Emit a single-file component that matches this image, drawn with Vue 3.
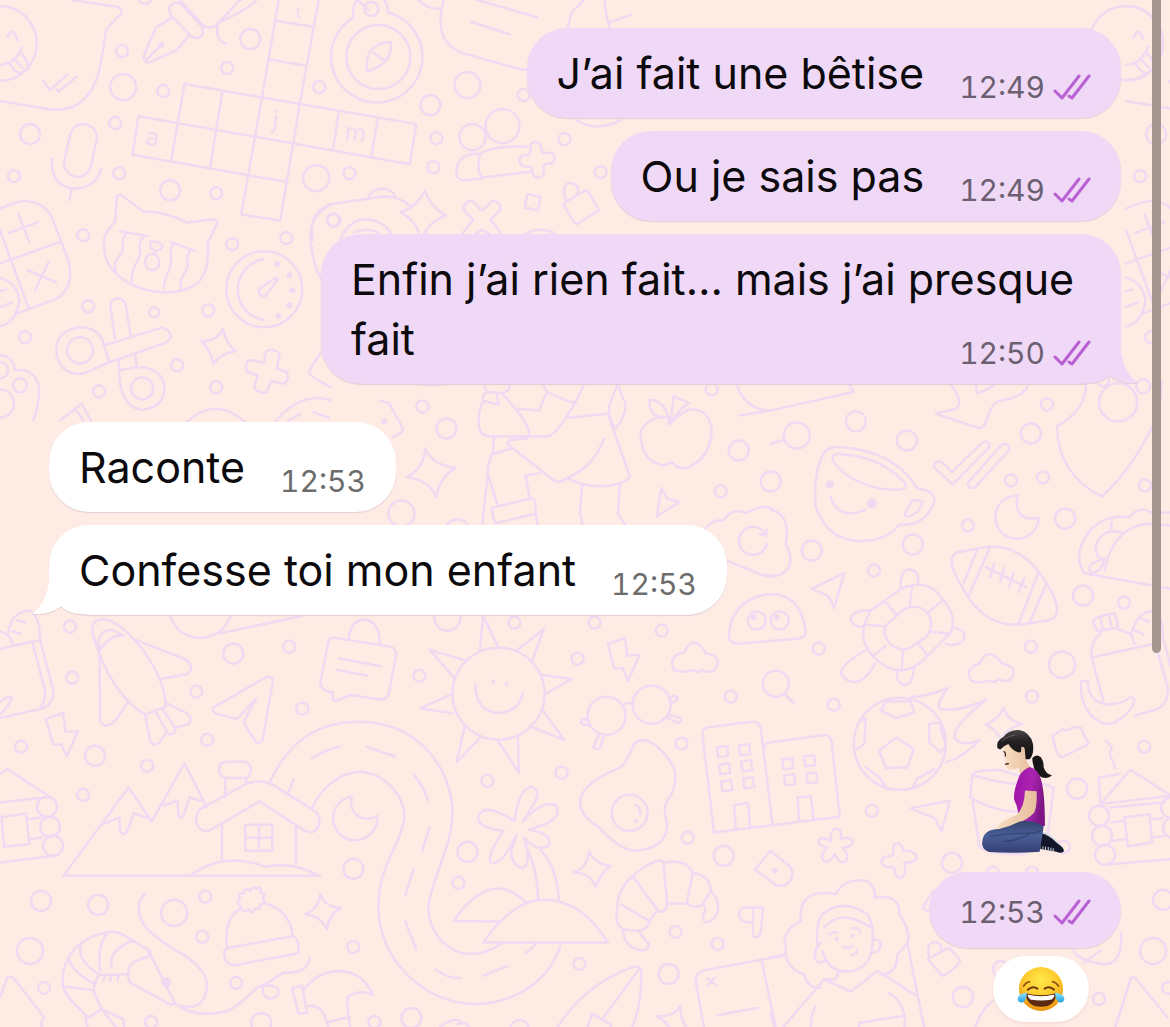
<script setup>
const messages = [
  { id: 1, out: true, text: 'J’ai fait une bêtise', time: '12:49' },
  { id: 2, out: true, text: 'Ou je sais pas', time: '12:49' },
  { id: 3, out: true, text: 'Enfin j’ai rien fait… mais j’ai presque fait', time: '12:50', tail: true, long: true },
  { id: 4, out: false, text: 'Raconte', time: '12:53', first: true },
  { id: 5, out: false, text: 'Confesse toi mon enfant', time: '12:53', tail: true },
]

// Confetti rings of the wallpaper: [x, y, radius]
const rings = [
  [145, -2, 6], [122, 51, 6], [123, 87, 13], [163, 91, 6], [250, 39, 10], [227, 68, 6], [319, 87, 6], [115, 123, 6],
  [30, 134, 10], [14, 176, 6], [119, 173, 6], [170, 190, 10], [216, 193, 6], [316, 178, 13], [467, 85, 13], [430, 105, 10],
  [436, 138, 6], [433, 167, 6], [349, 173, 6], [523, 95, 6], [564, 139, 6], [600, 172, 6], [502, 126, 17], [472, 137, 13],
  [378, 57, 32], [371, 9, 7], [83, 235, 6], [232, 244, 6], [286, 238, 6], [88, 306, 6], [154, 312, 5], [208, 310, 6],
  [25, 337, 6], [177, 365, 6], [216, 387, 6], [99, 391, 6], [80, 350, 13], [142, 388, 11], [20, 385, 7], [0, 403, 14],
  [0, 370, 8], [264, 289, 38], [422, 406, 6], [446, 428, 10], [401, 513, 13], [711, 389, 6], [738, 450, 10], [770, 481, 10],
  [720, 491, 6], [514, 622, 6], [594, 622, 6], [661, 630, 6], [457, 532, 13], [447, 617, 13], [796, 435, 13], [855, 421, 10],
  [906, 440, 10], [1046, 404, 6], [1030, 433, 10], [1010, 480, 6], [1042, 477, 6], [967, 525, 6], [912, 544, 10], [811, 550, 10],
  [873, 570, 6], [1064, 518, 10], [1144, 485, 6], [1082, 595, 10], [1123, 602, 6], [1061, 664, 13], [1030, 646, 6], [1031, 696, 6],
  [818, 648, 6], [833, 704, 6], [1117, 402, 19], [1102, 380, 6], [1142, 386, 7], [775, 683, 13], [70, 626, 6], [72, 677, 6],
  [21, 746, 6], [95, 755, 10], [196, 691, 6], [233, 653, 10], [289, 646, 6], [302, 708, 6], [207, 739, 6], [147, 765, 6],
  [83, 794, 6], [353, 868, 10], [47, 806, 10], [50, 826, 10], [53, 845, 10], [577, 658, 6], [419, 675, 6], [730, 696, 6],
  [681, 743, 6], [561, 772, 6], [487, 780, 6], [467, 851, 10], [687, 837, 6], [723, 855, 10], [458, 882, 6], [498, 693, 46],
  [871, 810, 6], [1143, 746, 6], [1076, 788, 10], [951, 862, 10], [992, 872, 6], [1031, 872, 6], [1162, 899, 10], [1152, 950, 13],
  [962, 996, 10], [1098, 998, 6], [1167, 987, 6], [1000, 968, 8], [1063, 846, 6], [1098, 815, 10], [1101, 835, 10], [1104, 854, 10],
  [1170, 807, 10], [1172, 827, 10], [41, 900, 10], [98, 904, 10], [174, 912, 13], [205, 896, 6], [202, 936, 6], [30, 950, 13],
  [44, 987, 6], [236, 982, 6], [151, 1021, 6], [261, 1022, 10], [353, 946, 6], [374, 1021, 6], [675, 931, 6], [717, 943, 6],
  [668, 973, 10], [579, 963, 6], [411, 1017, 10], [519, 1028, 9], [606, 715, 19], [651, 704, 19], [629, 812, 18], [899, 743, 46],
  [756, 620, 9], [779, 620, 9], [333, 220, 6], [1125, 43, 37], [1155, 134, 10], [1139, 176, 6], [1150, 337, 6],
]
const dots = [
  [161, 45, 3], [277, 264, 3], [289, 275, 3], [292, 290, 3], [289, 305, 3], [278, 316, 3], [384, 421, 3], [829, 484, 4],
  [871, 503, 5], [753, 617, 3], [776, 617, 3], [493, 681, 2], [506, 683, 2], [635, 820, 2], [774, 870, 3], [836, 938, 2],
  [852, 935, 2], [166, 981, 5],
]
const windows = [
  [722, 751], [744, 749], [724, 768], [746, 765], [726, 785], [748, 782], [787, 763], [809, 760], [789, 779], [811, 777],
]

const speech = [
  'M0 18A110 112 0 0 1 0 242M22 112Q38 76 52 120M0 195Q50 190 66 140M28 190Q50 225 66 218Q95 205 82 190Q75 170 60 158M45 178L68 203',
  'M215 0L350 20Q370 25 362 42L318 88Q305 180 295 220Q260 340 150 328L0 303M130 243L150 270L203 222M170 268L175 274L231 229',
]
const calculator = 'M0 55Q60 30 78 33Q130 35 155 80L205 210Q225 290 170 325L50 370M0 220L180 155M0 120L85 352M55 72L88 155M28 128L115 95M146 215L105 300M83 240L168 276M0 262Q50 275 58 330Q50 395 0 408M0 303L18 298M0 350L35 337'

// Line drawings, grouped by the area of the wallpaper they fill (units are a third of a pixel)
const sketches = [
  { x: 1125, y: 0, d: speech },
  { x: 1125, y: 190, d: [calculator] },
  { x: 0, y: 0, d: [
    ...speech,
    'M512 55L468 82Q440 140 430 172Q432 190 450 186L530 150L565 108M512 45Q500 20 520 10Q535 5 545 15L605 80Q615 105 595 114Q580 115 570 105ZM538 0L612 78Q640 90 655 68L720 0M655 68Q750 25 768 0M655 68Q640 120 678 131M440 178L484 134',
    'M835 0L785 293L723 643L840 661L898 313L955 0M827 62L940 80M805 178L918 197M553 252L1248 372L1228 492L415 348L397 464L858 545M553 252L513 482M667 272L630 500M1015 338L998 450M1133 355L1113 467',
    'M210 405Q220 370 252 372Q292 380 290 415L272 500Q260 532 230 530Q190 520 192 485ZM156 476Q150 560 225 566Q290 560 304 505M215 568L208 600',
  ] },
  { x: 300, y: 0, d: [
    'M160 52A137 137 0 1 0 265 38M160 52Q155 20 170 0M265 38Q262 15 252 0M200 214Q190 130 272 126Q275 195 200 214M218 158L250 180M172 0L205 30',
    'M355 0Q375 25 420 28M430 0Q395 130 490 160L660 208L690 209M530 0L710 52M512 65L628 103M850 0L812 38L802 82M912 0Q915 50 928 82M925 68L990 45',
    'M540 460Q465 460 468 520Q470 540 490 540L545 535M540 460Q525 510 545 532L690 515M540 460Q580 435 680 440',
    'M690 440Q690 425 705 425Q722 428 722 445Q722 460 735 458Q762 455 763 473Q762 492 742 490Q726 490 730 505Q735 530 712 532Q695 530 695 510Q694 498 680 500Q655 498 657 478Q660 462 678 465Q692 465 690 440Z',
    'M825 358Q885 400 965 358M788 610L855 570Q865 572 895 630L828 672Q820 670 788 610ZM796 600Q780 550 812 548Q840 555 830 580M680 582L720 590L712 630L673 622Z',
    'M373 572Q390 620 436 645Q395 660 373 697M373 572Q350 620 300 635Q345 660 355 697M488 697L518 660L490 630Q490 603 515 602L545 632L575 602Q600 603 600 628L570 658L600 697M525 700L545 688L565 700',
    'M38 720Q20 640 90 612L250 588Q300 590 325 615M205 590Q215 565 250 566Q275 568 285 588M120 715Q150 655 200 657Q250 662 270 697M160 697Q200 680 235 697M80 660A20 20 0 1 1 120 660A20 20 0 1 1 80 660M680 697Q720 680 760 697',
  ] },
  { x: 0, y: 190, d: [
    calculator,
    'M345 95L350 20Q358 8 370 20L430 64Q490 62 560 97L640 87Q655 90 648 105L622 160Q630 230 600 270Q560 310 480 305Q400 300 345 248Q300 200 315 135Q325 115 345 95ZM360 123L442 137M510 155L585 182M378 130q-15 20-10 35t-12 35t-10 45M428 140q-12 20-8 35t-12 45t-14 55M520 160q-12 20-8 40t-6 40t-16 55M570 180q-12 20-8 35t-10 35t-10 50',
    'M450 155Q475 150 488 168Q475 185 460 180Q448 172 450 155ZM468 180L462 192M435 216A21 25 0 1 1 477 216A21 25 0 1 1 435 216',
    'M791 207A92 92 0 0 0 791 389M822 265L778 295Q772 318 795 318L832 268Q832 260 822 265Z',
    'M345 445L330 345Q335 322 358 324Q375 328 378 350L392 437M312 465L485 412Q512 418 512 440Q505 455 490 460L330 515L250 550Q175 555 168 480Q170 420 240 411Q300 412 312 465L328 515M355 510L357 540Q358 650 425 659Q495 650 493 590Q485 530 410 530L357 540M405 493L410 530',
    'M668 415Q680 465 706 482Q660 490 640 520Q630 475 603 452Q650 455 668 415ZM797 484Q815 470 838 490L830 535L860 545Q868 570 850 580L812 572L800 605Q775 612 762 592L772 555L740 545Q732 515 750 508L790 518Z',
    'M0 495Q40 498 45 540Q110 530 118 600Q115 650 100 690M180 690L245 640L272 690M225 655L250 690M555 700Q645 610 740 700M820 700Q900 600 990 630M865 690L900 670M940 665L985 682M962 485L925 545Q925 555 990 590M990 45Q920 80 932 160Q940 230 965 270',
  ] },
  { x: 380, y: 370, d: [
    'M110 40Q155 50 200 40M0 92L25 97L68 175Q68 190 35 200M135 233Q155 285 226 292Q180 315 167 380Q150 330 78 320Q130 295 135 233Z',
    'M312 45L318 65L360 68Q390 65 388 40M318 65Q305 75 308 92L355 103L350 75M308 92Q290 130 296 170Q300 200 340 198L500 198Q540 190 612 40M365 70Q450 160 445 190L440 205L390 208L380 220L520 330Q540 340 560 322Q640 290 670 205M410 115L475 120L498 70M490 45Q485 70 585 98M565 142L680 130M712 40Q695 80 685 110Q685 150 705 175Q735 140 735 100Q720 70 712 40M685 140L748 318Q740 335 690 345Q620 355 560 322',
    'M340 198L338 245Q320 280 322 310L305 465M338 250L390 235M322 310L350 400M478 308L435 315L448 385M335 412L455 383Q468 385 465 430L345 458Q335 440 335 412ZM465 430L472 465M605 345L598 425L607 465M718 338L712 430L735 465',
    'M868 140Q800 135 780 185Q780 275 850 285L875 275Q890 300 925 290Q990 260 993 180Q985 110 925 118Q895 130 866 162Q860 90 806 88Q805 140 850 140M872 150L878 78L926 98Q900 110 880 145M842 352L828 438L897 394L860 385Z',
    'M975 475Q995 445 1030 450Q1050 410 1095 428Q1150 400 1175 415M1032 568L1150 615L1170 618M1158 520A42 42 0 1 1 1150 485M1158 478L1155 495L1138 490M1068 42Q1090 115 1170 122M1170 220L1208 208',
    'M1044 801Q1050 690 1155 672Q1260 660 1275 786Q1272 801 1254 804L1071 819Q1050 819 1044 801Z',
  ] },
  { x: 770, y: 380, d: [
    'M-95 105L0 90L248 35L235 12M540 12Q580 70 555 85L495 100L625 143Q640 145 650 110Q665 65 690 60Q760 50 772 12M615 12L617 38Q640 35 668 15M945 12Q945 90 858 138Q860 280 992 348Q1080 270 1148 130Q1175 60 1170 0',
    'M160 215Q175 200 205 200Q370 210 440 325Q495 330 490 365Q460 440 385 432Q350 480 270 482Q170 480 135 380Q125 280 160 215ZM185 235Q185 215 220 222Q330 230 400 305Q415 325 385 328Q300 330 230 285Q190 255 185 235ZM180 350Q200 420 283 388M425 358L455 362Q450 395 415 407L400 405Z',
    'M543 275L510 243Q495 240 487 258L545 312L655 200Q655 178 635 185ZM695 190Q720 190 714 210L610 322Q590 325 590 308ZM740 345A65 65 0 1 0 803 412Q725 425 740 345Z',
    'M560 515L655 498Q740 495 800 570Q860 650 858 690Q855 715 835 718L760 730Q660 745 595 655Q540 570 542 540Q545 520 560 515ZM620 505L577 610M657 500L592 650M803 575L742 730M826 610L775 728M645 560L765 620M670 548L658 590M700 562L688 604M728 577L714 620M760 592L742 635',
    'M300 690L390 625Q470 590 515 655Q560 710 540 755L450 845Q380 900 310 830Q250 770 300 690ZM345 735L400 685Q450 665 475 705Q490 740 465 770L420 800Q380 820 350 780Q335 755 345 735ZM425 615L415 680M515 660L475 692M475 752L535 760M440 785L470 825M397 808L392 870M345 795L305 828M340 737L280 732M345 665L375 700M390 625Q385 565 420 567Q448 575 440 610M300 690Q240 685 240 720Q250 740 275 738M548 742Q585 745 580 775Q565 800 525 790M430 860Q425 915 400 913Q375 905 378 872M285 808Q205 855 212 880Q230 910 265 902Q295 885 312 850',
    'M122 625L220 578L190 683Q178 650 165 642ZM0 388Q60 400 45 490Q75 550 40 575Q20 592 -20 584M600 900Q580 860 625 850Q650 790 695 850Q735 855 727 885Q710 912 685 895Q670 910 650 900Q620 910 600 900ZM42 942L70 968',
    'M940 578Q900 520 960 445Q1010 400 1075 410Q1110 370 1145 400L1200 395M940 578L1200 625M960 575Q940 550 1000 535Q990 580 960 575M1000 570Q1030 430 1140 430L1200 435M1050 455Q990 440 973 500Q978 540 1000 535M1022 420L1020 445',
    'M968 720Q965 710 1030 698Q1040 720 1040 740L980 752Q968 740 968 720ZM988 708L995 750M1014 702L1022 745M988 758Q955 790 962 830L998 965M965 830L1170 785M1030 742L1080 760L1090 790M1082 755Q1100 690 1150 692Q1175 700 1175 770L1200 860M1160 815L1190 920Q1195 965 1160 985L1090 1005M1110 715L1135 722M1092 750L1118 762M930 900L950 902Q950 960 1000 970Q1050 975 1080 948Q1095 955 1085 975Q1050 1030 1000 1030Q925 1000 930 900Z',
  ] },
  { x: 0, y: 590, d: [
    'M25 125Q35 65 85 60Q120 70 120 148L160 300Q160 350 110 357L0 382M0 175L118 148M97 155L135 300Q135 340 115 357M0 122Q30 130 38 160M50 88L75 95M38 122L62 130M0 372Q30 345 35 320Q20 315 0 335',
    'M137 385L190 367L195 422L233 422L200 498L185 462L160 460ZM278 130Q270 85 310 86Q360 90 430 180Q500 280 495 350L470 358L435 372Q330 310 278 130ZM298 190L300 390Q315 420 345 390L383 335M400 145L560 208Q585 235 560 250L480 265M298 180Q330 130 370 135Q310 95 295 150ZM435 372L450 450Q460 470 478 455L495 430M495 335L560 368Q580 385 565 400L525 412M465 362L505 430Q525 435 525 412L485 352',
    'M640 350L800 258Q818 258 818 270L788 445Q780 460 768 455L730 395L768 323L710 385L645 368Q635 360 640 350ZM508 70Q530 140 600 142Q670 140 693 70M660 128L905 76',
    'M985 150Q990 140 1005 142L1170 168Q1190 175 1187 195L1165 310Q1160 325 1145 327L1050 313L1005 332Q995 330 997 305Q960 300 960 275ZM1045 148Q1050 85 1095 87Q1140 95 1138 162M1015 203L1142 227M1008 237L1102 255',
    'M0 550L22 535L150 618L0 635M0 680L78 668L88 760L12 768L5 680M82 685L120 680M90 745L125 740M0 815L165 795',
    'M190 855L385 590L455 692L553 517L620 650M190 855H960M303 702L358 680L360 720Q370 745 385 712L402 667L440 682M490 645L532 630L535 675Q545 690 555 660L568 620L610 632',
    'M600 655L740 578Q780 565 815 580L945 662Q970 690 945 720Q930 730 910 718L778 632L630 718Q600 730 587 690Q588 665 600 655ZM665 700V805M887 705V820M735 702H816V780H735ZM776 702V780M735 741H816M570 855Q670 780 795 828Q880 810 955 855M675 620V565M738 578V565M680 562Q657 560 657 538Q657 513 680 513H730Q752 515 752 538Q750 562 730 562Z',
    'M808 576C870 435 975 390 1080 393C1260 396 1359 540 1356 675C1350 780 1296 855 1284 945C1284 1035 1350 1089 1410 1089Q1460 1089 1500 1059M933 654C975 570 1035 543 1086 543C1170 555 1212 630 1212 675C1206 760 1134 820 1134 945C1134 1110 1275 1239 1422 1239C1545 1239 1644 1170 1680 1065',
    'M935 503Q980 475 1018 468M1100 468L1183 498M880 565L862 612M1055 617A66 66 0 1 0 1130 675C1085 700 1040 665 1055 617Z',
  ] },
  { x: 390, y: 600, d: [
    'M268 148L278 45L322 138M380 148L460 85L425 180M455 222L543 235L465 280M458 330L520 417L420 378M382 408L385 516L322 420M268 412L198 485L222 380M185 338L90 323L185 280M190 230L117 147L225 180M255 250Q255 330 320 337Q385 335 397 278',
    'M652 130L703 112L710 165L747 162L712 242L697 203L672 205ZM850 208Q830 165 880 155Q910 95 945 158Q990 165 980 195Q965 225 935 208Q920 218 905 208Q880 218 850 208ZM1183 280L1210 308',
    'M697 315Q705 305 730 308M838 290Q860 280 860 297Q850 308 838 303M835 342L870 352Q878 362 862 367L828 350M592 355Q570 355 570 366Q580 376 594 372M625 402L608 440Q618 450 630 440L640 402',
    'M755 418Q800 420 850 500Q865 550 830 600Q815 620 830 670Q830 740 735 750Q690 750 620 675Q560 640 570 590Q590 540 690 500Q705 490 725 440Q735 418 755 418ZM735 612Q750 620 748 640',
    'M970 695L935 400Q935 385 950 380L1085 363Q1105 362 1110 380L1145 670M970 695L1347 648L1322 420Q1318 405 1305 403L1135 425Q1120 428 1120 445M1035 685L1030 613L1072 607L1078 680M1225 658L1220 590L1260 586L1268 652',
    'M372 660Q385 560 425 558Q450 570 435 600L398 662Q450 600 495 612Q520 650 450 675L415 687Q490 700 473 735Q440 755 400 710Q425 790 395 802Q360 790 362 750L378 703Q330 800 300 785Q290 760 340 690Q260 680 263 650Q275 600 372 660ZM405 735Q440 800 443 895M450 748Q500 800 505 898',
    'M595 752Q620 795 660 795Q630 815 615 860Q600 815 550 815Q590 800 595 752ZM70 520Q100 560 112 598M118 678L95 750M70 805L45 882M0 460L10 468',
  ] },
  { x: 390, y: 850, d: [
    'M190 210L325 212M190 210Q300 50 405 153M278 275Q370 145 460 147Q570 145 652 275ZM45 212L78 297M135 355Q170 382 210 382M278 375L352 345M405 308L435 280',
    'M725 75Q780 30 812 28L820 35Q890 25 905 65Q960 75 960 120Q990 150 980 185Q965 215 945 215Q930 205 943 180Q945 165 935 162Q910 175 888 158L830 158Q825 190 800 180Q780 200 775 215Q770 235 745 240Q755 260 775 280Q775 300 750 298Q700 290 697 235Q670 220 680 170Q680 120 725 75ZM725 75L803 180M818 32L830 158M907 65L888 158M960 120L935 162M690 160L775 210M697 235L745 240',
    'M1085 215Q1045 215 1045 190Q1045 170 1070 170H1117L1110 245Q1105 262 1090 258Q1083 255 1088 175M500 531Q580 400 730 347Q755 345 752 365Q755 450 725 531M745 355L638 500M590 531L605 488L660 520V531',
    'M795 495Q850 500 868 465Q870 510 890 531M795 495Q825 510 838 531M940 531L915 390Q915 365 940 358L1175 315M1113 330L1155 531M980 493L1103 470M950 382L975 402M972 380L952 404M145 531Q190 495 212 512M200 520L225 515L240 531',
  ] },
  { x: 770, y: 680, d: [
    'M376 170L428 205L410 260L345 262L325 210ZM330 90L378 112L430 95L420 62L345 62ZM475 130L505 125L525 195L510 215L475 185ZM275 118L285 115L280 190L258 205M285 260L325 290L350 325M490 265L438 295L425 322M420 50Q480 45 530 22Q490 80 510 85Q560 95 645 58Q550 130 550 170Q570 200 625 178Q580 230 525 245',
    'M697 80Q710 120 752 130Q700 145 690 180Q680 150 645 132Q690 110 697 80M845 165L875 145L880 150L915 138L930 142L952 190L872 230Q855 225 845 165ZM1005 180L1022 200Q1010 225 1025 240L1032 262',
    'M983 290L1045 280M983 290L988 370L1078 267L1200 345L988 370M1015 380L1180 365M1060 410L1135 400L1143 485L1070 497ZM1020 425L1060 420M1140 415L1175 412M1025 480L1065 475M1145 470L1180 465M1000 552L1200 535',
    'M605 280Q620 265 690 268L848 320L825 500M605 280L597 350Q690 405 780 390M605 360L625 495Q640 520 760 520M610 285Q700 310 750 310M420 382L537 360L512 452L492 412Q455 400 420 382Z',
    'M180 480Q178 445 195 443Q215 445 210 475Q245 465 245 485Q240 500 215 500Q240 530 222 543Q205 550 192 520Q175 550 158 540Q145 525 170 500Q140 495 143 478Q155 465 180 480ZM370 490Q390 480 398 510Q435 510 437 530Q430 548 400 545Q410 590 385 592Q370 585 370 560Q330 560 332 540Q335 525 365 525ZM0 512L50 550Q75 575 58 600Q40 622 15 612L-47 567L-2 510Z',
    'M150 920Q110 925 100 880Q40 860 45 800Q30 750 90 720Q80 620 195 640Q220 590 290 600Q320 630 310 650Q390 640 385 700Q420 750 410 785Q400 800 380 820Q380 880 330 880M140 800Q135 720 155 700Q215 650 290 700Q310 730 305 790Q300 870 225 872Q170 870 155 810M160 740Q210 680 300 740M152 785Q130 800 132 835Q145 850 160 840M305 775Q335 775 328 800Q320 820 305 812M175 765Q180 750 200 755M245 742Q265 738 268 755M215 798Q235 805 245 795M240 822Q262 820 258 805',
    'M205 870L195 895L160 895L35 1041M160 895L240 932L320 870L438 945M120 1041Q120 1000 135 975M355 937Q410 970 400 1041M265 1041V1025L395 1005M410 790L460 1041M0 828L40 822M0 1000L12 1041',
    'M470 835L535 800L568 838Q550 870 515 885ZM475 830Q465 785 490 783Q515 785 510 810M488 628L455 680Q460 690 485 692M908 808Q920 840 1000 850Q1055 850 1050 755M940 845L990 808M612 1041Q640 960 690 950M1032 1041L1080 890Q1090 885 1100 900L1190 1010',
  ] },
  { x: 0, y: 850, d: [
    'M385 380Q375 330 445 318L450 300L395 268Q350 235 320 245Q240 260 205 320Q165 400 215 450L265 500L305 475L280 420Q285 380 300 372L380 370M445 300L525 458Q515 465 500 455L390 395L385 380M400 268Q320 300 335 350M320 248Q290 290 300 360M242 282Q230 330 300 372M205 320Q220 370 288 400M197 408L283 418M255 495L262 531M305 475L370 505L372 531M305 475L350 531M315 375L310 390M335 370L330 390M355 370L352 390',
    'M435 128Q400 160 430 220Q450 250 530 300Q620 350 620 405Q615 470 565 467Q530 465 525 458Q590 505 680 480Q710 470 770 410Q810 395 850 365Q920 370 928 322M790 405Q780 440 815 443Q845 430 830 410Q810 400 790 405',
    'M680 292Q670 200 720 175M790 155Q870 180 878 255M680 292L880 255Q900 270 893 308L700 343Q670 340 672 300ZM720 165Q705 150 720 145Q710 125 730 128Q735 105 750 120Q760 100 768 115Q785 100 780 125Q800 130 788 142Q800 158 780 160Q785 180 765 172Q755 195 748 175Q725 190 720 165Z',
    'M960 130Q975 170 1022 170Q985 190 980 235Q960 195 915 190Q955 175 960 130ZM875 412L905 404L920 485L895 488ZM910 418Q950 360 1020 360Q1090 365 1118 432Q1080 415 1045 435Q1035 450 1050 531M925 465Q965 460 980 515L985 531M985 512L1048 498M0 440L22 380Q30 375 40 380L133 500L120 520L130 531',
  ] },
]
</script>

<template>
  <main class="chat">
    <svg class="wallpaper" viewBox="0 0 1170 1027" preserveAspectRatio="xMinYMin slice" aria-hidden="true">
      <g class="lines">
        <circle v-for="([x, y, r], i) in rings" :key="i" :cx="x" :cy="y" :r="r" />
        <rect
          v-for="([x, y], i) in windows"
          :key="i"
          :x="x - 5"
          :y="y - 5"
          width="10"
          height="10"
          :transform="`rotate(-7 ${x} ${y})`"
        />
      </g>
      <g class="dots">
        <circle v-for="([x, y, r], i) in dots" :key="i" :cx="x" :cy="y" :r="r" />
        <text x="152" y="145" transform="rotate(8 152 138)">a</text>
        <text x="275" y="128" transform="rotate(8 275 122)">j</text>
        <text x="355" y="141" transform="rotate(8 355 134)">m</text>
        <text class="minor" x="298" y="18">t</text>
      </g>
      <g
        v-for="(sketch, i) in sketches"
        :key="i"
        class="sketch"
        :transform="`translate(${sketch.x} ${sketch.y}) scale(0.33333)`"
      >
        <path v-for="(d, j) in sketch.d" :key="j" :d="d" />
      </g>
    </svg>

    <div class="scrollbar"></div>

    <section class="thread">
      <article
        v-for="m in messages"
        :key="m.id"
        class="bubble"
        :class="{ out: m.out, in: !m.out, long: m.long, first: m.first }"
      >
        <svg v-if="m.tail" class="tail" viewBox="0 0 56 44" aria-hidden="true">
          <path d="M18 0C17 20 12 33 0 42C10 44 20 41 29 35C35 41 44 43 56 43V0Z" />
          <path class="edge" d="M0 42C10 44 20 41 29 35C35 41 44 43 56 43" />
        </svg>
        <span class="text">{{ m.text }}</span>
        <span class="meta">
          <time>{{ m.time }}</time>
          <svg v-if="m.out" class="ticks" viewBox="0 0 38 28" aria-label="Lu">
            <path d="M2 18L9 25L26 3M16 23L19 25L36 3" />
          </svg>
        </span>
      </article>

      <article class="sticker">
        <svg class="woman" viewBox="34 36 258 382" role="img" aria-label="Femme à genoux">
          <defs>
            <linearGradient id="jeans" x1="0" y1="0" x2="0" y2="1">
              <stop offset="0" stop-color="#35446f" />
              <stop offset="0.45" stop-color="#4a5f96" />
              <stop offset="1" stop-color="#343f74" />
            </linearGradient>
            <linearGradient id="shirt" x1="0" y1="0" x2="1" y2="0.3">
              <stop offset="0" stop-color="#a012a8" />
              <stop offset="0.6" stop-color="#ab23b0" />
              <stop offset="1" stop-color="#7d1684" />
            </linearGradient>
            <linearGradient id="skin" x1="0" y1="0" x2="1" y2="0">
              <stop offset="0" stop-color="#f9dfc4" />
              <stop offset="1" stop-color="#e6bd9c" />
            </linearGradient>
            <linearGradient id="hair" x1="0" y1="0" x2="0" y2="1">
              <stop offset="0" stop-color="#4a4547" />
              <stop offset="0.4" stop-color="#242022" />
              <stop offset="1" stop-color="#151214" />
            </linearGradient>
          </defs>
          <path fill="#191617" d="M188 126Q200 112 214 124Q223 138 222 154Q228 174 247 178Q236 191 216 184Q192 174 188 130Z" />
          <path fill="#d8dbe2" d="M212 344Q245 352 282 396L274 400L214 362Z" />
          <path fill="#12172c" d="M212 352Q240 358 262 382Q288 400 282 408Q274 414 260 408L212 400Z" />
          <path stroke="#d8dbe2" stroke-width="3" d="M220 392V402M228 393V403M236 394V405M244 396V407M251 398V409" />
          <path fill="url(#skin)" d="M104 84Q98 102 105 116Q102 126 107 134Q105 140 110 145Q108 158 120 161Q136 162 147 155L152 176L184 158L170 134L172 100Q150 70 112 80Z" />
          <path fill="url(#hair)" d="M84 98Q76 76 102 62Q118 40 148 42Q182 48 190 84Q194 114 180 130L168 130L165 98Q160 88 154 96Q157 108 150 110Q128 106 116 84Q104 88 92 101Z" />
          <path fill="none" stroke="#77706f" stroke-width="3" opacity="0.7" d="M96 78Q108 60 136 58" />
          <path fill="none" stroke="#3b2723" stroke-width="4" stroke-linecap="round" d="M103 107Q108 109 107 120M108 145L116 143" />
          <path fill="url(#shirt)" d="M151 176Q160 162 180 153Q205 158 214 190Q226 230 226 330Q200 338 145 322Q150 285 133 250Q131 222 151 176Z" />
          <path fill="url(#skin)" d="M166 224L201 226Q203 270 194 290Q172 314 130 328L96 342Q82 344 79 337Q94 316 110 311L140 298Q165 275 166 224Z" />
          <path fill="url(#jeans)" d="M37 386Q36 340 88 340Q118 334 148 318Q190 310 222 332Q217 370 210 408Q130 414 58 409Q40 404 37 386Z" />
          <path fill="none" stroke="#2d3b66" stroke-width="4" opacity="0.7" d="M60 362Q130 352 184 352Q150 374 100 378M186 354Q206 350 216 342" />
        </svg>
        <div class="bubble out small">
          <span class="meta">
            <time>12:53</time>
            <svg class="ticks" viewBox="0 0 38 28" aria-label="Lu">
              <path d="M2 18L9 25L26 3M16 23L19 25L36 3" />
            </svg>
          </span>
        </div>
        <button class="reaction" type="button" aria-label="Réaction : pleurer de rire">
          <svg viewBox="0 0 146 138" aria-hidden="true">
            <defs>
              <radialGradient id="face" cx="0.5" cy="0.3" r="0.75">
                <stop offset="0" stop-color="#ffea4a" />
                <stop offset="0.55" stop-color="#fdc62a" />
                <stop offset="1" stop-color="#e8890c" />
              </radialGradient>
              <linearGradient id="tear" x1="0" y1="0" x2="0" y2="1">
                <stop offset="0" stop-color="#8fe0fb" />
                <stop offset="1" stop-color="#23a3e6" />
              </linearGradient>
            </defs>
            <circle cx="73" cy="69" r="67" fill="url(#face)" />
            <path fill="#5a2a13" d="M27 82Q73 94 119 82Q118 123 73 123Q28 123 27 82Z" />
            <path fill="#fff" d="M32 86Q73 96 114 86Q114 96 106 101Q73 107 40 101Q33 96 32 86Z" />
            <path fill="none" stroke="#6b3510" stroke-width="6" stroke-linecap="round" d="M33 71Q48 58 62 68M84 68Q98 58 113 71" />
            <path fill="none" stroke="#8b4d10" stroke-width="5" stroke-linecap="round" d="M20 60Q26 49 38 47M108 47Q120 49 126 60" />
            <path fill="url(#tear)" d="M30 80Q0 84 2 102Q6 113 18 109Q30 103 30 80ZM116 80Q146 84 144 102Q140 113 128 109Q116 103 116 80Z" />
          </svg>
        </button>
      </article>
    </section>
  </main>
</template>

<style>
body {
  margin: 0;
  background: #feebe4;
}
</style>

<style scoped>
.chat {
  position: relative;
  min-height: 100vh;
  overflow: hidden;
  box-sizing: border-box;
  background: #feebe4;
  color: #0c0a0d;
  font-family: Inter, "Liberation Sans", sans-serif;
}

.wallpaper {
  position: absolute;
  inset: 0;
  width: 100%;
  height: 100%;
}

.lines,
.sketch {
  fill: none;
  stroke: #f0daf2;
  stroke-width: 2.5;
  stroke-linecap: round;
  stroke-linejoin: round;
}

.sketch {
  stroke-width: 7.5;
}

.dots {
  fill: #f0daf2;
  font-size: 24px;
  text-anchor: middle;
}

.minor {
  font-size: 16px;
}

.scrollbar {
  position: absolute;
  z-index: 2;
  top: 0;
  right: 9px;
  width: 9px;
  height: 653px;
  border-radius: 0 0 5px 5px;
  background: #a59690;
}

.thread {
  position: relative;
  display: flex;
  flex-direction: column;
  gap: 13px;
  padding: 28px 49px 6px;
}

.bubble {
  position: relative;
  isolation: isolate;
  display: flex;
  gap: 35px;
  box-sizing: border-box;
  max-width: 800px;
  padding: 15px 30px;
  border-radius: 40px;
  box-shadow: 0 1px 1px #e2cdd3;
}

.out {
  align-self: flex-end;
  background: #f0d9f7;
}

.in {
  align-self: flex-start;
  background: #fff;
}

.first {
  margin-top: 25px;
}

.text {
  font-size: 43px;
  line-height: 60px;
}

.meta {
  display: flex;
  align-items: center;
  align-self: flex-end;
  gap: 8px;
  height: 32px;
  color: #6b5f70;
  font-size: 30px;
  font-variant-numeric: tabular-nums;
  line-height: 32px;
}

.in .meta {
  color: #6c6c6c;
}

.long {
  display: flow-root;
}

.long .meta {
  float: right;
  margin-top: 28px;
}

.ticks {
  width: 38px;
  height: 28px;
  fill: none;
  stroke: #b860d4;
  stroke-width: 3;
  stroke-linecap: round;
  stroke-linejoin: round;
}

.tail {
  position: absolute;
  z-index: -1;
  bottom: -1px;
  left: -17px;
  width: 56px;
  height: 44px;
  fill: #fff;
}

.tail .edge {
  fill: none;
  stroke: #e2cdd3;
}

.out .tail {
  right: -17px;
  left: auto;
  transform: scaleX(-1);
  fill: #f0d9f7;
}

.sticker {
  display: flex;
  flex-direction: column;
  align-items: flex-end;
  margin-top: 100px;
}

.woman {
  width: 86px;
  height: 127px;
  margin-right: 54px;
}

.small {
  margin-top: 17px;
  padding: 24px 30px 20px;
}

.reaction {
  display: flex;
  align-items: center;
  justify-content: center;
  width: 96px;
  height: 66px;
  margin: 8px 32px 0 0;
  padding: 0;
  border: 0;
  border-radius: 33px;
  background: #fff;
  box-shadow: 0 2px 3px #f6dcd8;
}

.reaction svg {
  width: 48px;
  height: 46px;
}
</style>
